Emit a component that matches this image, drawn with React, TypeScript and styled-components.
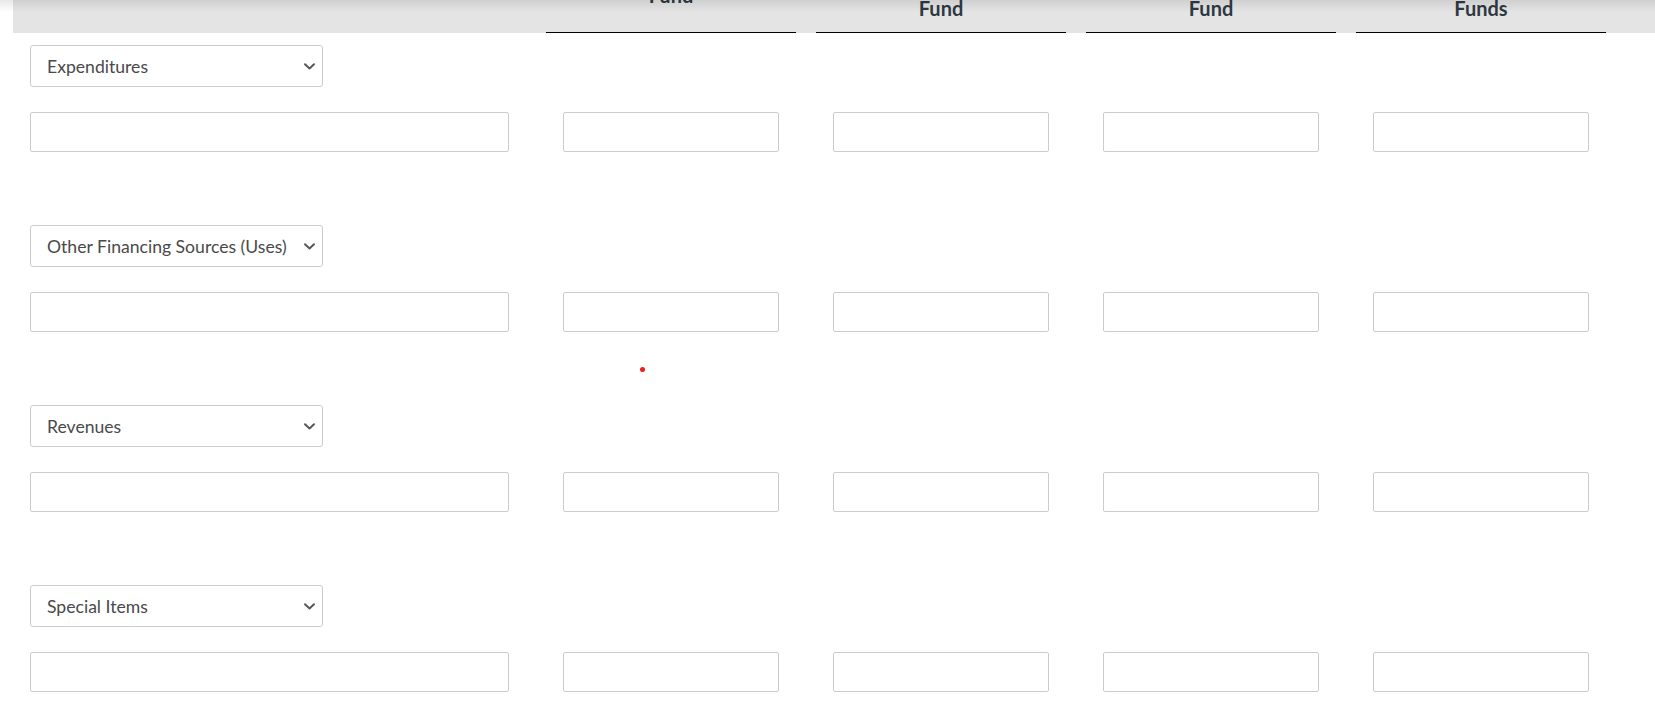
import React from 'react'
import styled, { createGlobalStyle } from 'styled-components';

const GlobalStyle = createGlobalStyle`
  html, body {
    margin: 0;
    padding: 0;
    background: #ffffff;
    font-family: Lato, "Open Sans", "Liberation Sans", sans-serif;
    color: #444;
  }
`

type THead = {
  label: string;
  raised?: boolean;
}

const funds: THead[] = [
  { label: 'Fund', raised: true },
  { label: 'Fund' },
  { label: 'Fund' },
  { label: 'Funds' },
]

const groups = ['Expenditures', 'Other Financing Sources (Uses)', 'Revenues', 'Special Items']

const Chevron = () => (
  <svg width="11" height="7" viewBox="0 0 11 7" fill="none">
    <path d="M1 1.2 L5.5 5.5 L10 1.2" stroke="#555" strokeWidth="1.9" strokeLinecap="round" strokeLinejoin="round" />
  </svg>
)

const Group: React.FC<{ label: string }> = (props) => {
  return (
    <Section>
      <Dropdown type="button">
        <DropLabel>{props.label}</DropLabel>
        <Chevron />
      </Dropdown>
      <Row>
        <Cell><Field /></Cell>
        {funds.map((f, i) => (
          <Cell key={i}><Field /></Cell>
        ))}
      </Row>
    </Section>
  )
}

const App: React.FC = () => {
  return (
    <Page>
      <GlobalStyle />
      <TopShadow />
      <Header>
        <HeadCell />
        {funds.map((f, i) => (
          <FundHead key={i} $raised={f.raised}>
            <HeadText>{f.label}</HeadText>
          </FundHead>
        ))}
      </Header>
      {groups.map((g) => <Group key={g} label={g} />)}
      <Dot />
    </Page>
  )
}

export default App;

const Page = styled.div`
  position: relative;
  width: 1655px;
  height: 703px;
  overflow: hidden;
  padding-left: 13px;
  box-sizing: border-box;
`

const TopShadow = styled.div`
  position: absolute;
  top: 0;
  left: 0;
  right: 0;
  height: 12px;
  background: linear-gradient(rgba(0, 0, 0, 0.09), rgba(0, 0, 0, 0));
  pointer-events: none;
  z-index: 2;
`

const Header = styled.div`
  display: grid;
  grid-template-columns: 513px repeat(4, 250px);
  grid-template-rows: 33px;
  column-gap: 20px;
  height: 33px;
  overflow: hidden;
  background: #e4e4e4;
`

const HeadCell = styled.div``

const FundHead = styled.div<{ $raised?: boolean }>`
  display: flex;
  flex-direction: column;
  justify-content: flex-end;
  align-items: center;
  height: 33px;
  box-sizing: border-box;
  border-bottom: 1px solid #000;
  padding-bottom: ${(p) => (p.$raised ? '26px' : '13px')};
`

const HeadText = styled.span`
  font-size: 20px;
  line-height: 22px;
  font-weight: 700;
  color: #2f3942;
  white-space: nowrap;
`

const Section = styled.div`
  display: flex;
  flex-direction: column;
  align-items: flex-start;
  gap: 25px;
  padding: 12px 0 61px;
`

const Dropdown = styled.button`
  display: flex;
  align-items: center;
  justify-content: space-between;
  width: 293px;
  height: 42px;
  margin: 0 0 0 17px;
  padding: 0 7px 0 16px;
  border: 1px solid #cccccc;
  border-radius: 3px;
  background: #fff;
  box-sizing: border-box;
  cursor: pointer;
`

const DropLabel = styled.span`
  font-family: Lato, "Open Sans", "Liberation Sans", sans-serif;
  font-size: 17.6px;
  color: #4a4a4a;
  white-space: nowrap;
`

const Row = styled.div`
  display: grid;
  grid-template-columns: 513px repeat(4, 250px);
  column-gap: 20px;
`

const Cell = styled.div`
  padding: 0 17px;
`

const Field = styled.input.attrs({ type: 'text' })`
  display: block;
  width: 100%;
  height: 40px;
  border: 1px solid #cccccc;
  border-radius: 2px;
  box-sizing: border-box;
  background: #fff;
  font-family: Lato, "Open Sans", "Liberation Sans", sans-serif;
  font-size: 16px;
  outline: none;
`

const Dot = styled.div`
  position: absolute;
  left: 640px;
  top: 367px;
  width: 5px;
  height: 5px;
  border-radius: 50%;
  background: #ee1c1c;
`
